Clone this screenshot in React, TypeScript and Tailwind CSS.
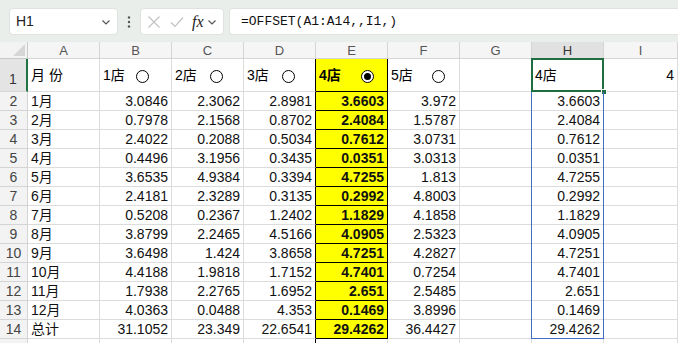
import React from 'react';

const cols = ['A', 'B', 'C', 'D', 'E', 'F', 'G', 'H', 'I'];

const months = ['1月', '2月', '3月', '4月', '5月', '6月', '7月', '8月', '9月', '10月', '11月', '12月', '总计'];
const b = ['3.0846', '0.7978', '2.4022', '0.4496', '3.6535', '2.4181', '0.5208', '3.8799', '3.6498', '4.4188', '1.7938', '4.0363', '31.1052'];
const c = ['2.3062', '2.1568', '0.2088', '3.1956', '4.9384', '2.3289', '0.2367', '2.2465', '1.424', '1.9818', '2.2765', '0.0488', '23.349'];
const d = ['2.8981', '0.8702', '0.5034', '0.3435', '0.3394', '0.3135', '1.2402', '4.5166', '3.8658', '1.7152', '1.6952', '4.353', '22.6541'];
const e = ['3.6603', '2.4084', '0.7612', '0.0351', '4.7255', '0.2992', '1.1829', '4.0905', '4.7251', '4.7401', '2.651', '0.1469', '29.4262'];
const f = ['3.972', '1.5787', '3.0731', '3.0313', '1.813', '4.8003', '4.1858', '2.5323', '4.2827', '0.7254', '2.5485', '3.8996', '36.4427'];

const font = { fontFamily: '"Liberation Sans", "Noto Sans CJK SC", sans-serif' };

// header cells of row 1: label + radio offset (px from cell left)
const stores = [
    { label: '1店', x: 'left-[36px]', on: false },
    { label: '2店', x: 'left-[38px]', on: false },
    { label: '3店', x: 'left-[38px]', on: false },
    { label: '4店', x: 'left-[45px]', on: true },
    { label: '5店', x: 'left-[44px]', on: false },
];

const Radio = ({ on, pos }: { on: boolean; pos: string }) => (
    <span className={`absolute ${pos} top-[11px] w-[13px] h-[13px] rounded-full border border-black bg-white flex items-center justify-center`}>
        {on && <span className="w-[7px] h-[7px] rounded-full bg-black" />}
    </span>
);

const Chevron = () => (
    <svg width="10" height="10" viewBox="0 0 10 10" fill="none" stroke="#555" strokeWidth="1.2">
        <path d="M1.5 3.5 L5 7 L8.5 3.5" />
    </svg>
);

const Toolbar = () => (
    <div className="h-[42px] bg-[#eaeeeb] flex items-center pl-[9px] gap-0 pt-[1px]">
        <div className="w-[109px] h-[27px] bg-white rounded-[4px] border border-[#dfe3e0] flex items-center justify-between pl-[6px] pr-[6px] text-[14px] text-[#222]" style={font}>
            <span>H1</span>
            <Chevron />
        </div>
        <div className="w-[22px] flex justify-center text-[#555]">
            <svg width="4" height="14" viewBox="0 0 4 14" fill="#555">
                <circle cx="2" cy="2.5" r="1.2" />
                <circle cx="2" cy="7" r="1.2" />
                <circle cx="2" cy="11.5" r="1.2" />
            </svg>
        </div>
        <div className="w-[84px] h-[27px] bg-white rounded-[4px] border border-[#dfe3e0] flex items-center pl-[6px] gap-[9px]">
            <svg width="14" height="14" viewBox="0 0 14 14" stroke="#c2c2c2" strokeWidth="1.2" fill="none">
                <path d="M1.5 1.5 L12.5 12.5 M12.5 1.5 L1.5 12.5" />
            </svg>
            <svg width="14" height="14" viewBox="0 0 14 14" stroke="#c2c2c2" strokeWidth="1.2" fill="none">
                <path d="M1 7.5 L5 11.5 L13 2.5" />
            </svg>
            <span className="italic text-[16px] text-[#222] -ml-[1px]" style={{ fontFamily: '"Liberation Serif", serif' }}>fx</span>
            <span className="-ml-[6px]"><Chevron /></span>
        </div>
        <div className="flex-1 ml-[5px] h-[27px] bg-white rounded-l-[4px] border border-r-0 border-[#dfe3e0] flex items-center pl-[11px] text-[13px] text-[#111]" style={{ fontFamily: '"Liberation Mono", monospace' }}>
            =OFFSET(A1:A14,,I1,)
        </div>
    </div>
);

const App: React.FC = () => {
    const rows = months.map((m, i) => [m, b[i], c[i], d[i], e[i], f[i], '', e[i], '']);

    return (
        <div className="w-[678px] h-[343px] overflow-hidden bg-white" style={font}>
            <Toolbar />

            <div className="grid grid-cols-[28px_repeat(8,72px)_1fr]">
                {/* column headers */}
                <div className="h-[17px] bg-[#f3f3f3] border-r border-b border-[#c9c9c9] relative overflow-hidden">
                    <span className="absolute right-[2px] bottom-[2px] w-0 h-0 border-l-[12px] border-l-transparent border-b-[12px] border-b-[#d6d6d6]" />
                </div>
                {cols.map((col) => (
                    <div
                        key={col}
                        className={`h-[17px] border-r border-b border-[#d4d4d4] flex items-center justify-center text-[13px] leading-none ${col === 'H' ? 'bg-[#e1e1e1] text-[#333]' : 'bg-[#f5f5f5] text-[#555]'}`}
                    >
                        {col}
                    </div>
                ))}

                {/* row 1 */}
                <div className="h-[33px] bg-[#e4e4e4] border-r-2 border-r-[#217346] border-b border-b-[#d4d4d4] flex items-end justify-center pb-[1px] text-[14px] text-[#333]">1</div>
                <div className="h-[33px] border-r border-b border-[#dcdcdc] flex items-end pl-[3px] pb-[5px] text-[14px] text-black">月 份</div>
                {stores.map((s, i) => (
                    <div
                        key={s.label}
                        className={`relative h-[33px] border-b flex items-end pl-[3px] pb-[5px] text-[14px] text-black ${i === 3 ? 'bg-[#ffff00] font-bold border-black border-r' : i === 2 ? 'border-r border-r-black border-b-[#dcdcdc]' : 'border-r border-[#dcdcdc]'}`}
                    >
                        {s.label}
                        <Radio on={s.on} pos={s.x} />
                    </div>
                ))}
                <div className="h-[33px] border-r border-b border-[#dcdcdc]" />
                <div className="relative h-[33px] border-r border-b border-[#dcdcdc] flex items-end pl-[3px] pb-[5px] text-[14px] text-black">
                    4店
                    <span className="absolute -left-px -top-px -right-px -bottom-px border-2 border-[#1e6e42]" />
                    <span className="absolute -right-[4px] -bottom-[4px] w-[6px] h-[6px] bg-[#1e6e42] border border-white" />
                </div>
                <div className="h-[33px] border-r border-b border-[#dcdcdc] flex items-end justify-end pr-[3px] pb-[5px] text-[14px] text-black">4</div>

                {/* data rows */}
                {rows.map((r, ri) => (
                    <React.Fragment key={ri}>
                        <div className="h-[19px] bg-[#f3f3f3] border-r border-b border-[#d4d4d4] flex items-center justify-center text-[14px] leading-none text-[#444]">
                            {ri + 2}
                        </div>
                        {r.map((v, ci) => {
                            const isE = ci === 4;
                            const isH = ci === 7;
                            const border = isE
                                ? 'border-r border-b border-black bg-[#ffff00] font-bold'
                                : ci === 3
                                    ? 'border-r border-r-black border-b border-b-[#dcdcdc]'
                                    : 'border-r border-b border-[#dcdcdc]';
                            return (
                                <div
                                    key={ci}
                                    className={`relative h-[19px] flex items-center text-[14px] leading-none text-[#111] ${ci === 0 ? 'pl-[3px]' : 'justify-end pr-[3px]'} ${border}`}
                                >
                                    {v}
                                    {isH && (
                                        <span
                                            className={`absolute -left-px top-0 -right-px -bottom-px border-l border-r border-[#3e6fc1] ${ri === rows.length - 1 ? 'border-b' : ''}`}
                                        />
                                    )}
                                </div>
                            );
                        })}
                    </React.Fragment>
                ))}

                {/* row 15, cut off */}
                <div className="h-[19px] bg-[#f3f3f3] border-r border-[#d4d4d4]" />
                {cols.map((col) => (
                    <div key={col} className={`h-[19px] border-r ${col === 'D' ? 'border-black' : 'border-[#dcdcdc]'}`} />
                ))}
            </div>
        </div>
    );
};

export default App;
